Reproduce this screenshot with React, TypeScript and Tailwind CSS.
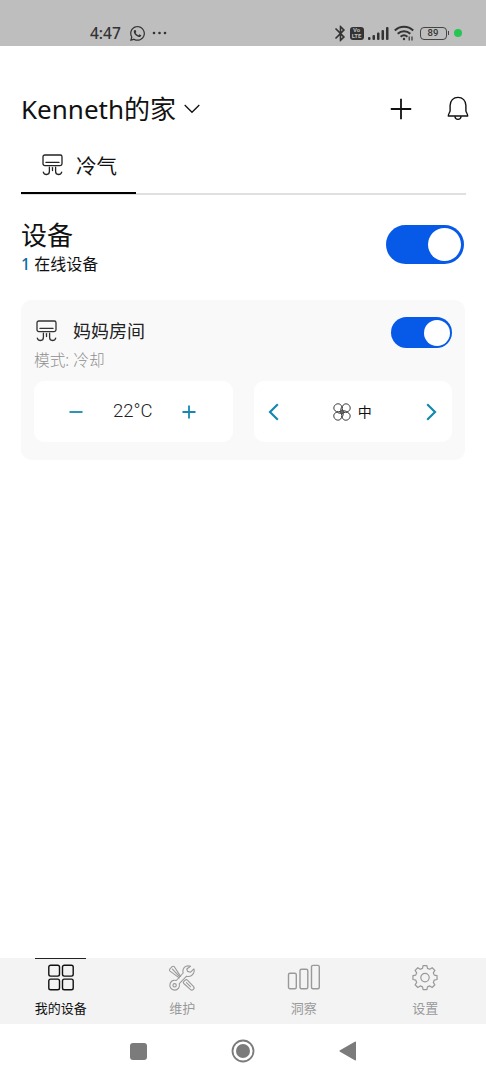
import React, { useState } from 'react';
import { FaWhatsapp } from 'react-icons/fa';
import { MdBluetooth } from 'react-icons/md';

interface IconProps {
    className?: string;
}

const AirconIcon: React.FC<IconProps> = ({ className }) => (
    <svg className={className} width="22" height="22" viewBox="0 0 22 22" fill="none" stroke="currentColor" strokeWidth="1.3" strokeLinecap="round">
        <rect x="1" y="1" width="19" height="10.6" rx="1.8" />
        <path d="M4 8.4h13" />
        <path d="M7.4 13.2v4.1c0 2-1 3.2-2.8 3.2-1.7 0-2.9-.8-3.3-2.4" />
        <path d="M10.5 13.6v3" />
        <path d="M13.6 13.2v4.1c0 2 1 3.2 2.8 3.2 1.7 0 2.900-.8 3.300-2.4" />
    </svg>
);

const BellIcon: React.FC<IconProps> = ({ className }) => (
    <svg className={className} width="22" height="26" viewBox="0 0 22 26" fill="none" stroke="currentColor" strokeWidth="1.4" strokeLinejoin="round">
        <path d="M3.1 14.8V9.600C3.1 4.600 6.400 1.400 11 1.400s7.900 3.200 7.900 8.200v5.200c0 1.600 1.800 2.600 1.800 5.200H1.300c0-2.600 1.800-3.600 1.800-5.200z" />
        <path d="M7.900 20.200c.2 2 1.400 3.200 3.100 3.200s2.900-1.200 3.100-3.200" />
    </svg>
);

const FanIcon: React.FC = () => (
    <svg width="18" height="18" viewBox="0 0 18 18" fill="none" stroke="#333" strokeWidth="1">
        {[0, 90, 180, 270].map(angle => (
            <path key={angle} transform={`rotate(${angle} 9 9)`} d="M7.400 8.500C4.600 9.200 1.800 8.600 1 6.200.3 3.300 2.400.8 5.100.8c2.700 0 4.100 2.300 3.100 4.400-.5 1-.6 1.600-.4 2.300" />
        ))}
        <circle cx="9" cy="9" r="1.900" />
        <circle cx="9" cy="9" r=".6" fill="#333" />
    </svg>
);

const GridIcon: React.FC = () => (
    <svg width="28" height="28" viewBox="0 0 28 28" fill="none" stroke="currentColor" strokeWidth="1.4">
        <rect x="1.800" y="1.200" width="10.700" height="10.900" rx="1.800" />
        <rect x="15.500" y="1.200" width="10.700" height="10.900" rx="1.800" />
        <rect x="1.800" y="15.100" width="10.700" height="10.600" rx="1.800" />
        <rect x="15.500" y="15.100" width="10.700" height="10.600" rx="1.800" />
    </svg>
);

const ToolsIcon: React.FC = () => (
    <svg width="28" height="28" viewBox="0 0 28 28" fill="none" stroke="currentColor" strokeWidth="1.1" strokeLinejoin="round" strokeLinecap="round">
        {/* wrench */}
        <path d="M22.5 2.200c-3-1-6.300.2-7.300 3-.5 1.300-.4 2.600 0 3.800L8.300 16.500c-2.700-.7-5.200.5-6.100 2.800-1.200 3.300 1 6.700 4.300 6.800 3.500 0 5.700-3.100 4.800-6.400l7.300-7.500c3.600 1 7.200-1.200 7.600-4.900.1-.8 0-1.600-.3-2.400l-3.300 3.300-3.100-.8-.7-2.400z" />
        <circle cx="6.600" cy="21.300" r="1.700" />
        {/* screwdriver */}
        <path d="M12.600 12.400 6.300 2.700c-.6-.7-1.500-.7-2.200 0L2 4.800c-.7.700-.7 1.600 0 2.300l9.200 6.800" />
        <path d="M4.400 5.200l7 7.300" />
        <path d="M15.700 17.600l1.500-1.500c.7-.7 1.500-.7 2.200 0l6 6.200c2 2.200-1.100 5-3.100 3.100l-6.500-5.900c-.7-.7-.8-1.200-.1-1.900z" />
        <path d="M18.400 18.700l4.100 4" />
    </svg>
);

const BarsIcon: React.FC = () => (
    <svg width="34" height="28" viewBox="0 0 34 28" fill="none" stroke="currentColor" strokeWidth="1.4">
        <rect x="1.500" y="9.300" width="7.800" height="15.400" rx="1.500" />
        <rect x="13" y="5.300" width="7.800" height="19.400" rx="1.500" />
        <rect x="24.500" y="1.400" width="7.800" height="23.300" rx="1.500" />
    </svg>
);

const toothPoints = [0, 1, 2, 3, 4, 5, 6, 7].flatMap(i =>
    [[-15, 9.6], [-9, 12.2], [9, 12.2], [15, 9.6]].map(([offset, radius]) => {
        const a = ((i * 45 + offset) * Math.PI) / 180;
        return `${(14 + radius * Math.sin(a)).toFixed(2)},${(13.6 - radius * Math.cos(a)).toFixed(2)}`;
    })
);

const GearIcon: React.FC = () => (
    <svg width="28" height="28" viewBox="0 0 28 28" fill="none" stroke="currentColor" strokeWidth="1.2" strokeLinejoin="round">
        <polygon points={toothPoints.join(' ')} />
        <circle cx="14" cy="13.6" r="4.2" />
    </svg>
);

const StatusBar: React.FC = () => (
    <div className="flex h-[46px] items-center justify-between bg-[#bebebe] pt-5 pr-6 pl-[90px] text-[#333]">
        <div className="flex items-center">
            <span className="w-[39px] font-['Noto_Sans','Noto_Sans_CJK_SC',sans-serif] text-[15.5px] leading-5 font-medium">4:47</span>
            <FaWhatsapp size={17} />
            <svg className="ml-1.5" width="16" height="4" viewBox="0 0 16 4" fill="currentColor">
                <circle cx="2" cy="2" r="1.3" />
                <circle cx="7.5" cy="2" r="1.3" />
                <circle cx="13" cy="2" r="1.3" />
            </svg>
        </div>
        <div className="flex items-center">
            <MdBluetooth size={19} />
            <div className="flex h-[13px] w-[14px] flex-col items-center justify-center rounded-[3px] bg-[#333] font-['Roboto',sans-serif] text-[6px] leading-[6px] font-bold text-[#bebebe]">
                <span>Vo</span>
                <span>LTE</span>
            </div>
            <svg className="ml-1" width="21" height="13" viewBox="0 0 21 13" fill="currentColor">
                <rect x="0" y="10" width="2.5" height="3" rx="1" />
                <rect x="4.5" y="8" width="2.5" height="5" rx="1" />
                <rect x="9" y="5.5" width="2.5" height="7.5" rx="1" />
                <rect x="13.5" y="3" width="2.5" height="10" rx="1" />
                <rect x="18" y="0" width="2.5" height="13" rx="1" />
            </svg>
            <svg className="ml-[5px]" width="20" height="16" viewBox="0 0 20 16" fill="none" stroke="currentColor" strokeWidth="2">
                <path d="M.8 5.500c5.200-5 13.200-5 18.400 0" />
                <path d="M3.700 8.800c3.600-3.500 9-3.500 12.600 0" />
                <path d="M6.600 11.800c2-1.900 4.800-1.900 6.800 0" />
                <circle cx="10" cy="14" r="1.2" fill="currentColor" stroke="none" />
                <path d="M15.200 15.500v-4M18 11.500v4" strokeWidth="1.2" />
            </svg>
            <div className="ml-1.5 flex h-[13px] w-[27px] items-center justify-center rounded-[4px] border-[1.5px] border-[#444] font-['Roboto',sans-serif] text-[9.5px] leading-none font-medium">89</div>
            <div className="ml-[1px] h-1 w-[1.5px] bg-[#444]" />
            <div className="ml-[5px] size-2 rounded-full bg-[#27c552]" />
        </div>
    </div>
);

const Toggle: React.FC<{ on: boolean; large?: boolean; onChange: () => void }> = ({ on, large, onChange }) => (
    <button
        role="switch"
        aria-checked={on}
        onClick={onChange}
        className={`flex items-center rounded-full ${on ? 'justify-end bg-[#0759e8]' : 'justify-start bg-gray-300'} ${large ? 'h-[39px] w-[78px] px-[3px]' : 'h-[31px] w-[61px] px-[2.5px]'}`}
    >
        <span className={`rounded-full bg-white ${large ? 'size-[33px]' : 'size-[26px]'}`} />
    </button>
);

const tabs = [
    { label: '我的设备', icon: <GridIcon /> },
    { label: '维护', icon: <ToolsIcon /> },
    { label: '洞察', icon: <BarsIcon /> },
    { label: '设置', icon: <GearIcon /> },
];

const App: React.FC = () => {
    const [allOn, setAllOn] = useState(true);
    const [roomOn, setRoomOn] = useState(true);
    const [temperature, setTemperature] = useState(22);
    const [activeTab, setActiveTab] = useState(0);

    return (
        <div className="flex h-[1080px] w-[486px] flex-col overflow-hidden bg-white font-['Noto_Sans','Noto_Sans_CJK_SC',sans-serif] text-[#111]">
            <StatusBar />

            {/* Home selector */}
            <header className="flex h-[103px] shrink-0 items-center justify-between pt-[22px] pr-[17px] pl-[21px]">
                <button className="flex items-center">
                    <span className="text-[26px] leading-9 whitespace-nowrap">Kenneth的家</span>
                    <svg className="ml-2" width="16" height="10" viewBox="0 0 16 10" fill="none" stroke="currentColor" strokeWidth="1.3">
                        <path d="M.7 1 8 8.300 15.300 1" />
                    </svg>
                </button>
                <div className="flex items-center gap-[35px]">
                    <svg width="22" height="22" viewBox="0 0 22 22" stroke="currentColor" strokeWidth="1.8">
                        <path d="M11 .8v20.400M.8 11h20.400" />
                    </svg>
                    <BellIcon />
                </div>
            </header>

            <nav className="mr-[20px] ml-[21px] flex h-[46px] shrink-0 border-b-2 border-[#e0e0e0]">
                <button className="-mb-0.5 flex h-[45px] w-[115px] items-center border-b-[2.5px] border-black pb-[9px] pl-[21px]">
                    <AirconIcon className="mb-0.5 text-[#222]" />
                    <span className="ml-3 text-[20.5px] leading-7">冷气</span>
                </button>
            </nav>

            <section className="mt-[23px] mr-[22px] ml-[21px] flex h-[60px] shrink-0 items-start justify-between">
                <div>
                    <h1 className="text-[26px] leading-[34px]">设备</h1>
                    <p className="flex gap-1 text-[16px] leading-6">
                        <span className="font-medium text-[#0b6aa5]">1</span>
                        <span>在线设备</span>
                    </p>
                </div>
                <div className="pt-[7px]">
                    <Toggle large on={allOn} onChange={() => setAllOn(!allOn)} />
                </div>
            </section>

            {/* Device card */}
            <section className="mt-[22px] mr-[21px] ml-[21px] h-[160px] shrink-0 rounded-[10px] bg-[#f9f9f9] px-[13px] pt-[17px]">
                <div className="flex h-[31px] items-center justify-between">
                    <div className="flex items-center pb-[3px] pl-[2px]">
                        <AirconIcon className="text-[#333]" />
                        <span className="ml-[15px] text-[18px] leading-6 text-[#222]">妈妈房间</span>
                    </div>
                    <Toggle on={roomOn} onChange={() => setRoomOn(!roomOn)} />
                </div>
                <p className="text-[15.7px] leading-6 font-light text-[#8f8f8f]">模式: 冷却</p>
                <div className="mt-[9px] grid grid-cols-2 gap-[21px]">
                    <div className="flex h-[61px] items-center justify-between rounded-[10px] bg-white pr-9 pl-[35px] text-[#1688b0]">
                        <button onClick={() => setTemperature(temperature - 1)}>
                            <svg width="14" height="14" viewBox="0 0 14 14" stroke="currentColor" strokeWidth="1.8">
                                <path d="M.5 7h13" />
                            </svg>
                        </button>
                        <span className="font-['Roboto',sans-serif] text-[18.5px] font-light text-[#222]">{temperature}°C</span>
                        <button onClick={() => setTemperature(temperature + 1)}>
                            <svg width="14" height="14" viewBox="0 0 14 14" stroke="currentColor" strokeWidth="1.8">
                                <path d="M.5 7h13M7 .5v13" />
                            </svg>
                        </button>
                    </div>
                    <div className="flex h-[61px] items-center justify-between rounded-[10px] bg-white pr-[15px] pl-3.5 text-[#1688b0]">
                        <svg width="11" height="18" viewBox="0 0 11 18" fill="none" stroke="currentColor" strokeWidth="2.2">
                            <path d="M9.800 1.200 2 9l7.800 7.800" />
                        </svg>
                        <div className="flex items-center gap-[7px] text-[#111]">
                            <FanIcon />
                            <span className="text-[14px] leading-5">中</span>
                        </div>
                        <svg width="11" height="18" viewBox="0 0 11 18" fill="none" stroke="currentColor" strokeWidth="2.2">
                            <path d="M1.200 1.200 9 9l-7.800 7.800" />
                        </svg>
                    </div>
                </div>
            </section>

            <div className="flex-1" />

            <nav className="grid h-[66px] shrink-0 grid-cols-4 bg-[#f3f3f3]">
                {tabs.map((tab, i) => (
                    <button
                        key={tab.label}
                        onClick={() => setActiveTab(i)}
                        className={`flex flex-col items-center ${i === activeTab ? 'text-[#111]' : 'text-[#999]'}`}
                    >
                        <span className={`h-px w-[51px] ${i === activeTab ? 'bg-[#222]' : 'bg-transparent'}`} />
                        <span className="mt-[5px] h-7">{tab.icon}</span>
                        <span className="mt-[6px] text-[13px] leading-5">{tab.label}</span>
                    </button>
                ))}
            </nav>

            {/* System navigation */}
            <div className="flex h-14 shrink-0 items-center justify-center gap-[84px] pr-[1px] pb-0.5">
                <div className="size-[17px] rounded-[3px] bg-[#7b7b7b]" />
                <svg className="text-[#7b7b7b]" width="24" height="24" viewBox="0 0 24 24" fill="none">
                    <circle cx="12" cy="12" r="10.5" stroke="currentColor" strokeWidth="1.8" />
                    <circle cx="12" cy="12" r="7" fill="currentColor" />
                </svg>
                <svg className="text-[#7b7b7b]" width="17" height="20" viewBox="0 0 17 20" fill="currentColor">
                    <path d="M15.800.7c.7-.4 1.200-.1 1.200.6v17.400c0 .7-.5 1-1.200.6L1 10.700c-.7-.4-.7-1 0-1.400z" />
                </svg>
            </div>
        </div>
    );
};

export default App;
